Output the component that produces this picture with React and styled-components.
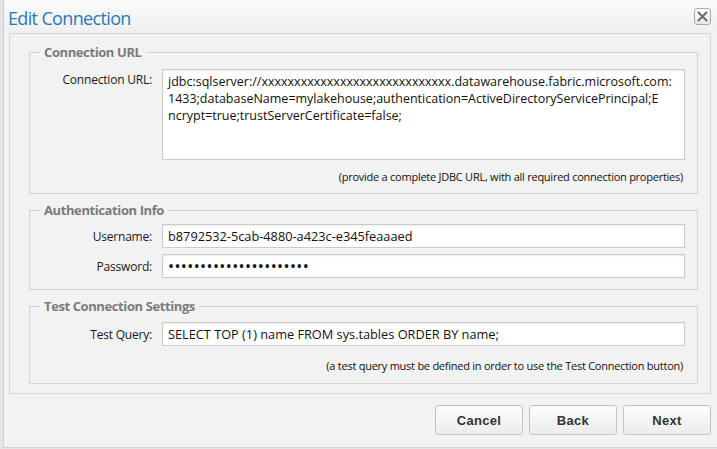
import React from 'react';
import styled, { createGlobalStyle } from 'styled-components';

const GlobalStyle = createGlobalStyle`
  html, body {
    margin: 0;
    padding: 0;
    background: #e4e4e4;
    font-family: "Open Sans", "Noto Sans", sans-serif;
  }
`;

const Dialog = styled.div`
  box-sizing: border-box;
  margin-left: 3px;
  width: 714px;
  height: 448px;
  background: #f2f2f2;
  border-left: 1px solid #cfcfcf;
  border-bottom: 1px solid #d2d2d2;
  display: flex;
  flex-direction: column;
`;

const TitleBar = styled.div`
  height: 33px;
  flex: none;
  display: flex;
  align-items: flex-start;
  justify-content: space-between;
  padding: 0 6px 0 4px;
  background: linear-gradient(180deg, #fbfbfb 0%, #efefef 100%);
  box-sizing: border-box;
`;

const Title = styled.h1`
  margin: 6px 0 0 0;
  font-size: 18px;
  line-height: 24px;
  font-weight: 400;
  color: #2a7ab6;
  letter-spacing: -0.65px;
`;

const CloseButton = styled.button`
  width: 17px;
  height: 17px;
  padding: 0;
  margin-top: 8px;
  border: 1px solid #a9a9a9;
  border-radius: 3px;
  background: linear-gradient(180deg, #ffffff 0%, #e6e6e6 100%);
  display: flex;
  align-items: center;
  justify-content: center;
`;

const Panel = styled.div`
  margin: 0 6px 0 5px;
  border: 1px solid #d6d6d6;
  padding: 9px 12px 9px 19px;
  display: flex;
  flex-direction: column;
  gap: 7px;
`;

const Group = styled.fieldset`
  margin: 0;
  border: 1px solid #d3d3d3;
  padding: ${p => p.$pad || '6px 12px 8px 0'};
  display: flex;
  flex-direction: column;
  gap: 6px;
  min-width: 0;
`;

const Legend = styled.legend`
  margin-left: 10px;
  padding: 0 4px;
  font-size: 13px;
  font-weight: 700;
  color: #7b7b7b;
  letter-spacing: -0.4px;
`;

const Row = styled.div`
  display: grid;
  grid-template-columns: 122px 1fr;
  column-gap: 10px;
  align-items: ${p => (p.$top ? 'start' : 'center')};
`;

const Label = styled.label`
  text-align: right;
  font-size: 12px;
  letter-spacing: -0.2px;
  color: #1a1a1a;
  padding-top: ${p => (p.$top ? '2px' : '0')};
`;

const Field = styled.input`
  box-sizing: border-box;
  height: 24px;
  width: 100%;
  margin: 0;
  padding: 0 5px;
  border: 1px solid #cbcbcb;
  box-shadow: inset 0 1px 2px rgba(0, 0, 0, 0.08);
  background: #fff;
  font-family: "Open Sans", "Noto Sans", sans-serif;
  font-size: 12.75px;
  color: #111;
  outline: none;
`;

const SecretField = styled(Field)`
  font-size: 16px;
  letter-spacing: 0.4px;
`;

const UrlBox = styled.div`
  box-sizing: border-box;
  height: 91px;
  padding: 3px 5px;
  border: 1px solid #cbcbcb;
  box-shadow: inset 0 1px 2px rgba(0, 0, 0, 0.08);
  background: #fff;
  font-size: 12.5px;
  line-height: 17px;
  color: #111;
  white-space: pre;
  overflow: hidden;
`;

const Hint = styled.div`
  text-align: right;
  font-size: 11px;
  letter-spacing: -0.25px;
  color: #111;
  padding-right: 2px;
  margin-top: ${p => p.$mt || '0'};
`;

const Footer = styled.div`
  flex: 1;
  display: flex;
  justify-content: flex-end;
  align-items: flex-start;
  gap: 6px;
  padding: 11px 6px 0 0;
`;

const Button = styled.button`
  width: 88px;
  height: 30px;
  border: 1px solid #c2c2c2;
  border-radius: 3px;
  background: linear-gradient(180deg, #fdfdfd 0%, #ececec 100%);
  font-family: "Liberation Sans", Arial, sans-serif;
  font-size: 13px;
  font-weight: 700;
  color: #333;
  letter-spacing: 0.3px;
`;

const CloseIcon = () => (
  <svg width="11" height="11" viewBox="0 0 11 11">
    <path d="M1.5 1.5 L9.5 9.5 M9.5 1.5 L1.5 9.5" stroke="#6a6a6a" strokeWidth="2" strokeLinecap="round" />
  </svg>
);

const urlLines = [
  'jdbc:sqlserver://xxxxxxxxxxxxxxxxxxxxxxxxxxxxx.datawarehouse.fabric.microsoft.com:',
  '1433;databaseName=mylakehouse;authentication=ActiveDirectoryServicePrincipal;E',
  'ncrypt=true;trustServerCertificate=false;',
];

export default function App() {
  return (
    <>
      <GlobalStyle />
      <Dialog>
        <TitleBar>
          <Title>Edit Connection</Title>
          <CloseButton aria-label="Close">
            <CloseIcon />
          </CloseButton>
        </TitleBar>

        <Panel>
          <Group $pad="8px 12px 9px 0">
            <Legend>Connection URL</Legend>
            <Row $top>
              <Label $top>Connection URL:</Label>
              <UrlBox>{urlLines.join('\n')}</UrlBox>
            </Row>
            <Hint $mt="3px">(provide a complete JDBC URL, with all required connection properties)</Hint>
          </Group>

          <Group $pad="5px 12px 11px 0">
            <Legend>Authentication Info</Legend>
            <Row>
              <Label>Username:</Label>
              <Field readOnly value="b8792532-5cab-4880-a423c-e345feaaaed" />
            </Row>
            <Row>
              <Label>Password:</Label>
              <SecretField readOnly type="password" value="xxxxxxxxxxxxxxxxxxxxxx" />
            </Row>
          </Group>

          <Group $pad="7px 12px 10px 0">
            <Legend>Test Connection Settings</Legend>
            <Row>
              <Label>Test Query:</Label>
              <Field readOnly value="SELECT TOP (1) name FROM sys.tables ORDER BY name;" />
            </Row>
            <Hint $mt="6px">(a test query must be defined in order to use the Test Connection button)</Hint>
          </Group>
        </Panel>

        <Footer>
          <Button>Cancel</Button>
          <Button>Back</Button>
          <Button>Next</Button>
        </Footer>
      </Dialog>
    </>
  );
}
